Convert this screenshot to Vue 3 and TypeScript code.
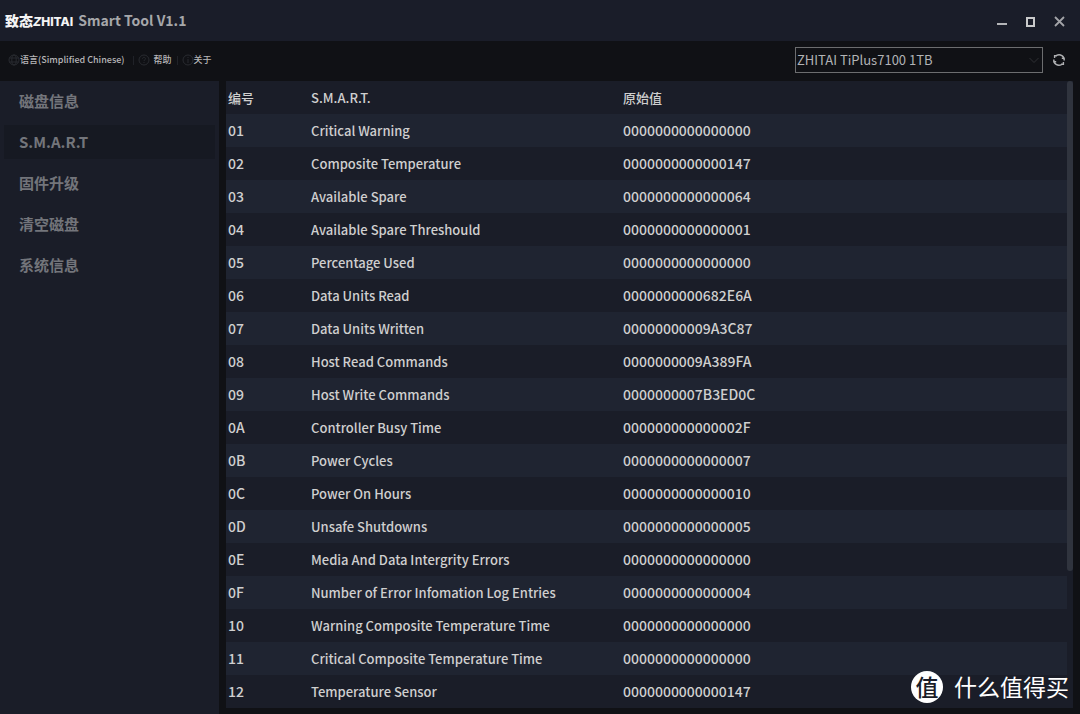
<script setup lang="ts">
import { ref } from 'vue'

interface Attribute {
  id: string
  name: string
  raw: string
}

const navItems: string[] = ['磁盘信息', 'S.M.A.R.T', '固件升级', '清空磁盘', '系统信息']
const activeNav = ref(1)
const drive = ref('ZHITAI TiPlus7100 1TB')

const attributes: Attribute[] = [
  { id: '01', name: 'Critical Warning', raw: '0000000000000000' },
  { id: '02', name: 'Composite Temperature', raw: '0000000000000147' },
  { id: '03', name: 'Available Spare', raw: '0000000000000064' },
  { id: '04', name: 'Available Spare Threshould', raw: '0000000000000001' },
  { id: '05', name: 'Percentage Used', raw: '0000000000000000' },
  { id: '06', name: 'Data Units Read', raw: '0000000000682E6A' },
  { id: '07', name: 'Data Units Written', raw: '00000000009A3C87' },
  { id: '08', name: 'Host Read Commands', raw: '0000000009A389FA' },
  { id: '09', name: 'Host Write Commands', raw: '0000000007B3ED0C' },
  { id: '0A', name: 'Controller Busy Time', raw: '000000000000002F' },
  { id: '0B', name: 'Power Cycles', raw: '0000000000000007' },
  { id: '0C', name: 'Power On Hours', raw: '0000000000000010' },
  { id: '0D', name: 'Unsafe Shutdowns', raw: '0000000000000005' },
  { id: '0E', name: 'Media And Data Intergrity Errors', raw: '0000000000000000' },
  { id: '0F', name: 'Number of Error Infomation Log Entries', raw: '0000000000000004' },
  { id: '10', name: 'Warning Composite Temperature Time', raw: '0000000000000000' },
  { id: '11', name: 'Critical Composite Temperature Time', raw: '0000000000000000' },
  { id: '12', name: 'Temperature Sensor', raw: '0000000000000147' }
]
</script>

<template>
  <div class="window">
    <header class="titlebar">
      <span class="logo">致态<span class="logo-latin"><i>Z</i>HITAI</span></span>
      <h1 class="title">Smart Tool V1.1</h1>
      <div class="window-controls">
        <button type="button" aria-label="Minimize">
          <svg width="12" height="12" viewBox="0 0 12 12"><path d="M1 9h10" stroke="#b4b5b8" stroke-width="2" /></svg>
        </button>
        <button type="button" aria-label="Maximize">
          <svg width="12" height="12" viewBox="0 0 12 12"><rect x="2" y="3" width="7" height="8" fill="none" stroke="#c9cacb" stroke-width="2" /></svg>
        </button>
        <button type="button" aria-label="Close">
          <svg width="12" height="12" viewBox="0 0 12 12"><path d="M1 2l9 9M10 2l-9 9" stroke="#a3a4a8" stroke-width="1.8" /></svg>
        </button>
      </div>
    </header>

    <div class="toolbar">
      <nav class="menu">
        <button type="button">
          <svg width="12" height="12" viewBox="0 0 12 12" fill="none" stroke="#292b30"><circle cx="6" cy="6" r="5" /><ellipse cx="6" cy="6" rx="2.2" ry="5" /><path d="M1.5 4h9M1.5 8h9" /></svg>
          <span>语言(Simplified Chinese)</span>
        </button>
        <button type="button" class="help">
          <svg width="12" height="12" viewBox="0 0 12 12" fill="none" stroke="#292b30"><circle cx="6" cy="6" r="5" /><path d="M4.5 4.8c0-2 3-2 3 0 0 1-1.5 1-1.5 2.2M6 8v1" /></svg>
          <span>帮助</span>
        </button>
        <button type="button">
          <svg width="12" height="12" viewBox="0 0 12 12" fill="none" stroke="#292b30"><circle cx="6" cy="6" r="5" /><path d="M6 3v1M6 5v4" /></svg>
          <span>关于</span>
        </button>
      </nav>
      <div class="drive-picker">
        <select v-model="drive" aria-label="Drive">
          <option>ZHITAI TiPlus7100 1TB</option>
        </select>
        <svg class="chevron" width="10" height="7" viewBox="0 0 10 7" fill="none" stroke="#2e3035"><path d="M.5 1L5 5.5 9.5 1" /></svg>
      </div>
      <button type="button" class="refresh" aria-label="Refresh">
        <svg width="14" height="14" viewBox="0 0 14 14" fill="none" stroke="#b0b1b3" stroke-width="1.4">
          <path d="M4.500 2.400A5.200 5.200 0 0 1 12.200 7.500M9.500 11.600A5.200 5.200 0 0 1 1.800 6.500" />
          <path d="M9.800 5.200h2.600M4.200 8.800h-2.600M2.600 5V2.800h2.400M11.400 9v2.200H9" />
        </svg>
      </button>
    </div>

    <main class="content">
      <nav class="sidebar">
        <button
          v-for="(item, index) in navItems"
          :key="item"
          type="button"
          :class="{ active: index === activeNav }"
          @click="activeNav = index"
        >{{ item }}</button>
      </nav>
      <section class="panel">
        <table>
          <thead>
            <tr><th class="col-id">编号</th><th class="col-name">S.M.A.R.T.</th><th>原始值</th></tr>
          </thead>
          <tbody>
            <tr v-for="attribute in attributes" :key="attribute.id">
              <td class="code">{{ attribute.id }}</td><td>{{ attribute.name }}</td><td class="code">{{ attribute.raw }}</td>
            </tr>
          </tbody>
        </table>
        <div class="scroll-track"><div class="scroll-thumb"></div></div>
      </section>
    </main>

    <div class="watermark"><span class="badge">值</span><span>什么值得买</span></div>
  </div>
</template>

<style>
body {
  margin: 0;
  background: #101115;
}
</style>

<style scoped>
.window {
  position: relative;
  display: flex;
  flex-direction: column;
  box-sizing: border-box;
  min-height: 100vh;
  background: #101115;
  color: #cfcfcf;
  font-family: "Noto Sans CJK SC", "Noto Sans", sans-serif;
}
button {
  padding: 0;
  border: 0;
  background: none;
  color: inherit;
  font: inherit;
}
svg {
  display: block;
}
.titlebar {
  display: flex;
  align-items: center;
  height: 41px;
  padding: 0 14px 0 5px;
  background: #1a1d29;
}
.logo {
  color: #f4f4f4;
  font-size: 14px;
  font-weight: 900;
  line-height: 20px;
}
.logo-latin {
  font-family: Inter, sans-serif;
  font-size: 12px;
  font-weight: 800;
}
.title {
  margin: 0;
  padding: 0 0 2px 5px;
  color: #a6a7aa;
  font-size: 14px;
  font-weight: 700;
  line-height: 20px;
}
.window-controls {
  display: flex;
  gap: 17px;
  margin-left: auto;
}
.toolbar {
  display: flex;
  align-items: center;
  box-sizing: border-box;
  height: 40px;
  padding: 0 14px 2px 8px;
}
.menu {
  display: flex;
  align-items: center;
  color: #b6b6b8;
  font-size: 9px;
  font-weight: 500;
  line-height: 16px;
}
.menu button {
  display: flex;
  align-items: center;
  white-space: nowrap;
}
.menu button + button::before {
  width: 1px;
  height: 9px;
  margin: 0 4px 0 5px;
  background: #202228;
  content: "";
}
.menu .help {
  margin-left: 3px;
}
.menu .help span {
  margin-left: 4px;
}
.drive-picker {
  position: relative;
  width: 248px;
  margin-left: auto;
}
.drive-picker select {
  display: block;
  box-sizing: border-box;
  width: 100%;
  height: 26px;
  padding: 0 1px;
  border: 1px solid #6c6d6f;
  border-radius: 0;
  appearance: none;
  background: #101115;
  color: #b2b3b5;
  font: 400 13px/20px "Noto Sans CJK SC", sans-serif;
}
.chevron {
  position: absolute;
  top: 10px;
  right: 4px;
}
.refresh {
  margin-left: 9px;
}
.content {
  display: flex;
  flex: 1;
  gap: 7px;
  padding-right: 7px;
}
.sidebar {
  display: flex;
  flex: 0 0 219px;
  flex-direction: column;
  gap: 7px;
  box-sizing: border-box;
  padding: 3px 4px;
  background: #1a1d28;
}
.sidebar button {
  height: 34px;
  padding: 0 0 2px 15px;
  color: #73757b;
  font-size: 15px;
  font-weight: 700;
  text-align: left;
}
.sidebar .active {
  background: #161922;
}
.panel {
  display: flex;
  flex: 1;
  align-self: flex-start;
  background: #1a1d28;
}
table {
  flex: 1;
  border-collapse: collapse;
  table-layout: fixed;
  font-size: 13px;
  font-weight: 500;
  line-height: 20px;
}
tr {
  height: 33px;
}
tbody tr:nth-child(odd) {
  background: #1f2431;
}
th,
td {
  padding: 0 2px;
  text-align: left;
}
th {
  font-weight: 500;
}
.code {
  padding-bottom: 1px;
  font-size: 14px;
}
.col-id {
  width: 79px;
}
.col-name {
  width: 308px;
}
.scroll-track {
  width: 6px;
}
.scroll-thumb {
  height: 490px;
  border-radius: 3px;
  background: #30343e;
}
.watermark {
  position: absolute;
  right: 11px;
  bottom: 11px;
  display: flex;
  align-items: center;
  gap: 11px;
  color: #fff;
  font-size: 23px;
  line-height: 32px;
}
.watermark span {
  padding-bottom: 1px;
}
.watermark .badge {
  width: 32px;
  height: 32px;
  padding: 0;
  border-radius: 50%;
  background: #fff;
  color: #1a1d28;
  font-weight: 500;
  line-height: 30px;
  text-align: center;
}
</style>
